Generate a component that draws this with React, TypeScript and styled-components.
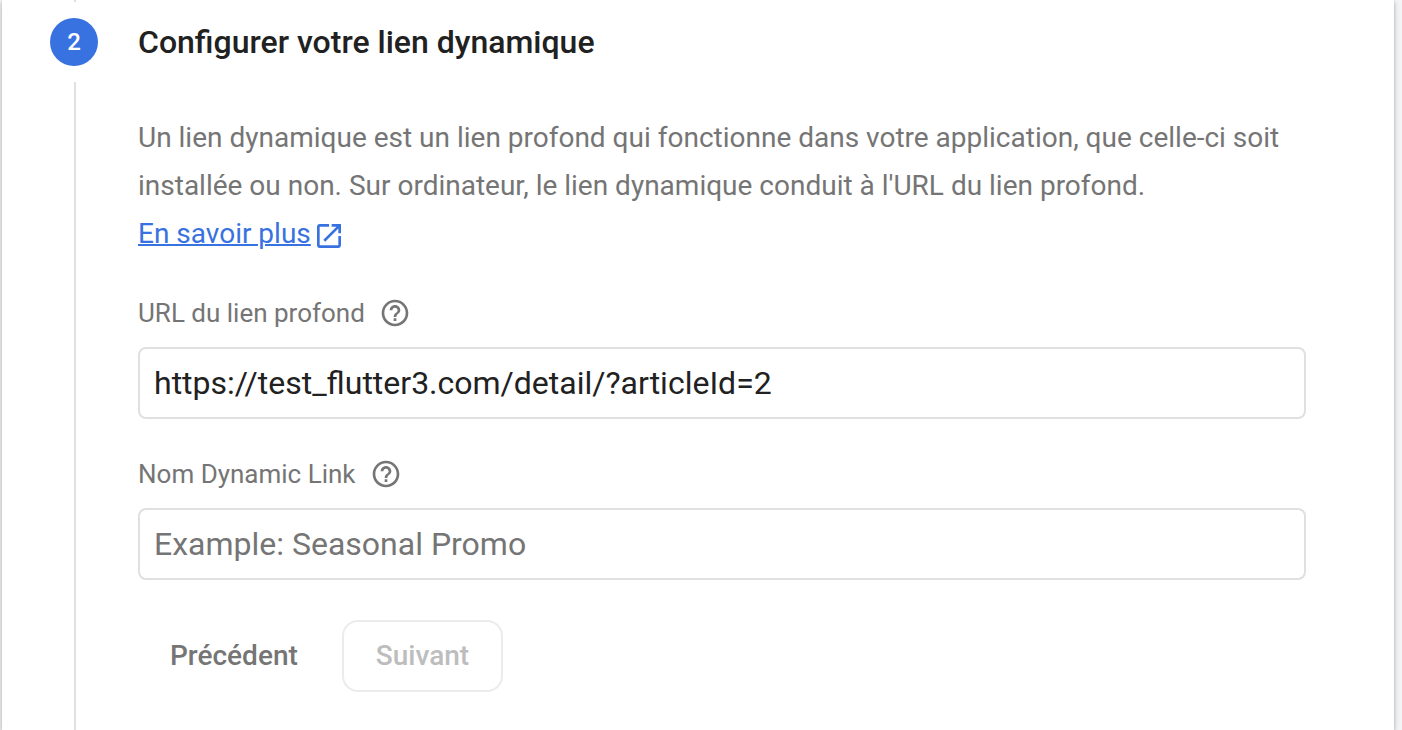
import React, { useState } from 'react';
import styled, { createGlobalStyle } from 'styled-components';

const GlobalStyle = createGlobalStyle`
  *, *::before, *::after { box-sizing: border-box; }
  html, body, #root { height: 100%; }
  body {
    margin: 0;
    background: #f5f6f8;
    color: #212121;
    font-family: Roboto, "Liberation Sans", sans-serif;
    font-size: 28px;
    line-height: 48px;
  }
`;

const Page = styled.main`
  display: flex;
  min-height: 100%;
  padding: 0 8px 0 2px;
`;

const Card = styled.section`
  display: flex;
  flex: 1;
  gap: 40px;
  min-width: 0;
  padding: 0 88px 0 48px;
  background: #fff;
  box-shadow: 0 2px 4px rgba(60, 64, 67, 0.4), 0 2px 12px rgba(60, 64, 67, 0.1);
`;

const Rail = styled.div`
  display: flex;
  flex: none;
  flex-direction: column;
  align-items: center;
  gap: 16px;
  width: 48px;
`;

const Line = styled.span<{ $grow?: boolean }>`
  width: 2px;
  height: 2px;
  flex: ${({ $grow }) => ($grow ? '1' : 'none')};
  margin-left: 2px;
  background: #e0e0e0;
`;

const StepNumber = styled.span`
  width: 48px;
  height: 48px;
  border-radius: 50%;
  background: #3871e0;
  color: #fff;
  font-size: 24px;
  font-weight: 500;
  text-align: center;
`;

const Content = styled.div`
  flex: 1;
  min-width: 0;
  padding: 18px 0 38px;
`;

const Title = styled.h2`
  margin: 0 0 48px;
  font-size: 32px;
  font-weight: 500;
`;

const Description = styled.p`
  margin: 0;
  color: #757575;
`;

const Icon = styled.svg`
  display: block;
  flex: none;
  width: 32px;
  height: 32px;
  fill: currentColor;
`;

const LearnMore = styled.a`
  color: #3871e0;
  text-decoration: underline;
  text-decoration-thickness: 2px;

  ${Icon} {
    display: inline-block;
    margin-left: 2px;
    vertical-align: middle;
  }
`;

const Form = styled.form`
  margin: 0;
`;

const Field = styled.div`
  padding-top: 39px;
`;

const LabelRow = styled.div`
  display: flex;
  align-items: center;
  gap: 14px;
  margin-bottom: 18px;
  color: #757575;
  font-size: 26px;
  line-height: 32px;
`;

const HelpButton = styled.button`
  padding: 0;
  border: 0;
  background: none;
  color: inherit;
  cursor: pointer;
`;

const TextInput = styled.input`
  display: block;
  width: 100%;
  height: 72px;
  padding: 0 14px;
  border: 2px solid #e0e0e0;
  border-radius: 8px;
  outline: none;
  background: #fff;
  color: #212121;
  font: inherit;
  font-size: 32px;

  &::placeholder { color: #757575; opacity: 1; }
  &:focus { border-color: #3871e0; }
`;

const Actions = styled.div`
  display: flex;
  gap: 12px;
  margin-top: 40px;
`;

const ActionButton = styled.button<{ $outlined?: boolean }>`
  height: 72px;
  padding: 0 ${({ $outlined }) => ($outlined ? '32px' : '30px')};
  border: 2px solid ${({ $outlined }) => ($outlined ? '#ebebeb' : 'transparent')};
  border-radius: 16px;
  background: none;
  color: #757575;
  font: inherit;
  font-weight: 500;
  cursor: pointer;

  &:disabled { color: #bdbdbd; cursor: default; }
`;

const OpenInNewIcon = () => (
  <Icon viewBox="0 0 24 24" aria-hidden="true">
    <path d="M19 19H5V5h7V3H5c-1.11 0-2 .9-2 2v14c0 1.1.89 2 2 2h14c1.1 0 2-.9 2-2v-7h-2v7zM14 3v2h3.59l-9.83 9.83 1.41 1.41L19 6.41V10h2V3h-7z" />
  </Icon>
);

const HelpIcon = () => (
  <Icon viewBox="0 0 24 24" aria-hidden="true">
    <path d="M11 18h2v-2h-2v2zm1-16C6.48 2 2 6.48 2 12s4.48 10 10 10 10-4.48 10-10S17.52 2 12 2zm0 18c-4.41 0-8-3.59-8-8s3.59-8 8-8 8 3.59 8 8-3.59 8-8 8zm0-14c-2.21 0-4 1.79-4 4h2c0-1.1.9-2 2-2s2 .9 2 2c0 2-3 1.75-3 5h2c0-2.25 3-2.5 3-5 0-2.21-1.79-4-4-4z" />
  </Icon>
);

type TextFieldProps = {
  id: string;
  label: string;
  value: string;
  placeholder?: string;
  onChange: (value: string) => void;
};

const TextField = ({ id, label, value, placeholder, onChange }: TextFieldProps) => (
  <Field>
    <LabelRow>
      <label htmlFor={id}>{label}</label>
      <HelpButton type="button" aria-label={`Aide : ${label}`}>
        <HelpIcon />
      </HelpButton>
    </LabelRow>
    <TextInput
      id={id}
      type="text"
      spellCheck={false}
      value={value}
      placeholder={placeholder}
      onChange={(event) => onChange(event.target.value)}
    />
  </Field>
);

export default function App() {
  const [url, setUrl] = useState('https://test_flutter3.com/detail/?articleId=2');
  const [name, setName] = useState('');

  return (
    <>
      <GlobalStyle />
      <Page>
        <Card>
          <Rail>
            <Line />
            <StepNumber>2</StepNumber>
            <Line $grow />
          </Rail>
          <Content>
            <Title>Configurer votre lien dynamique</Title>
            <Description>
              Un lien dynamique est un lien profond qui fonctionne dans votre application, que celle-ci soit
              installée ou non. Sur ordinateur, le lien dynamique conduit à l'URL du lien profond.
            </Description>
            <Description>
              <LearnMore href="#en-savoir-plus">
                En savoir plus
                <OpenInNewIcon />
              </LearnMore>
            </Description>
            <Form onSubmit={(event) => event.preventDefault()}>
              <TextField id="deep-link" label="URL du lien profond" value={url} onChange={setUrl} />
              <TextField
                id="link-name"
                label="Nom Dynamic Link"
                value={name}
                placeholder="Example: Seasonal Promo"
                onChange={setName}
              />
              <Actions>
                <ActionButton type="button">Précédent</ActionButton>
                <ActionButton type="submit" $outlined disabled={!name}>
                  Suivant
                </ActionButton>
              </Actions>
            </Form>
          </Content>
        </Card>
      </Page>
    </>
  );
}
